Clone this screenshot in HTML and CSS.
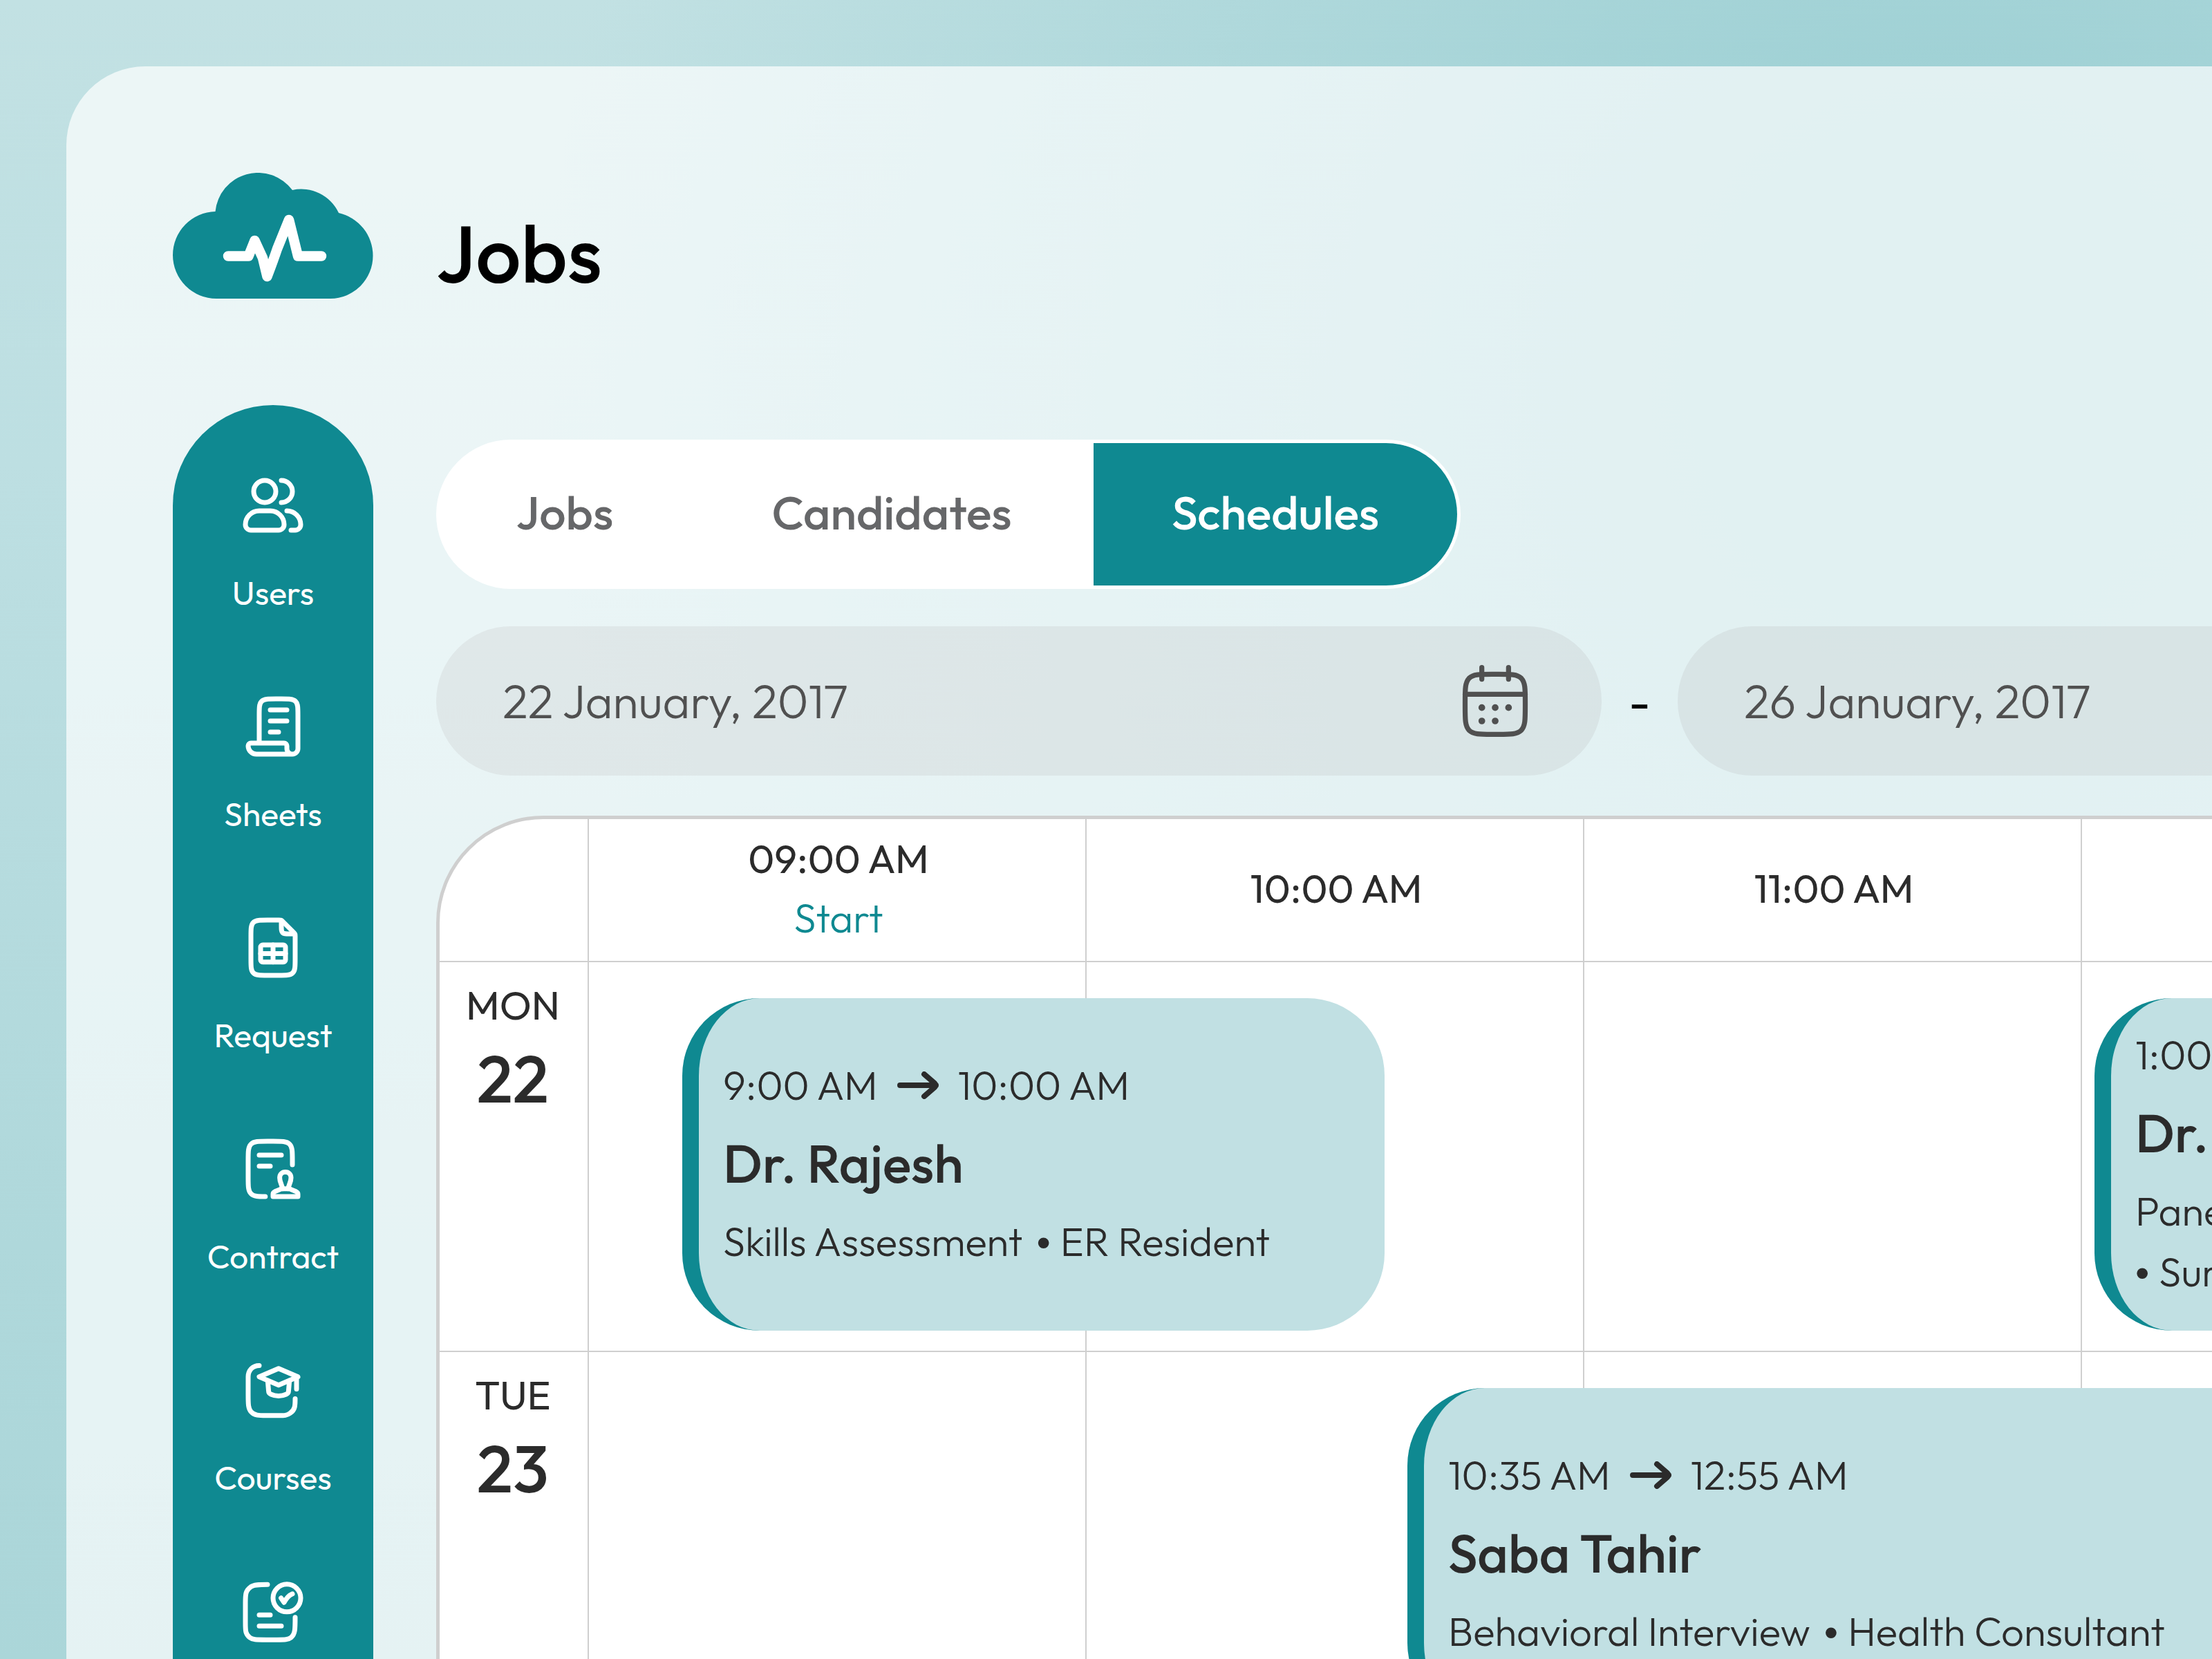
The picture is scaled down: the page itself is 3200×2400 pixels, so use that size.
FILE: index.html
```html
<!DOCTYPE html>
<html lang="en">
<head>
<meta charset="utf-8">
<meta name="viewport" content="width=device-width, initial-scale=1">
<title>Jobs – Schedules</title>
<link rel="stylesheet" href="styles.css">
</head>
<body>
<div class="panel">
  <header class="header">
    <a class="logo" href="#" aria-label="Home">
      <svg viewBox="0 0 290 182" width="290" height="182" aria-hidden="true">
        <path fill="#0f8991" d="M63 182A63 63 0 0 1 0 119A63 63 0 0 1 61.500 56A62 62 0 0 1 173 25A60 60 0 0 1 240 58A63.500 63.500 0 0 1 289.500 120A62 62 0 0 1 228 182Z"/>
        <path fill="none" stroke="#fff" stroke-width="14.500" stroke-linecap="round" stroke-linejoin="round" d="M80 120.500H109.500L118.500 98Q125 112 130 123L136.500 150Q146 125 151 110L168 68L181 120.500H215"/>
      </svg>
    </a>
    <h1 class="title">Jobs</h1>
  </header>

  <nav class="sidebar" aria-label="Main">
    <a class="side-item" href="#">
      <svg class="side-icon" viewBox="0 0 24 24" aria-hidden="true"><circle cx="9" cy="7" r="4"/><path d="M11 14H7C4.240 14 2 16.240 2 19C2 20.100 2.900 21 4 21H14C15.100 21 16 20.100 16 19C16 16.240 13.760 14 11 14Z"/><path d="M15 11C17.210 11 19 9.210 19 7C19 4.790 17.210 3 15 3"/><path d="M17 14C19.760 14 22 16.240 22 19C22 20.100 21.100 21 20 21H18.500"/></svg>
      <span>Users</span>
    </a>
    <a class="side-item" href="#">
      <svg class="side-icon" viewBox="0 0 24 24" aria-hidden="true"><path d="M7 18V8C7 5.170 7 3.760 7.880 2.880C8.760 2 10.170 2 13 2H15C17.830 2 19.240 2 20.120 2.880C21 3.760 21 5.170 21 8V20C21 21.100 20.100 22 19 22S17 21.100 17 20V19C17 18.450 16.550 18 16 18H4C3.450 18 3 18.450 3 19C3 20.660 4.340 22 6 22H19"/><path d="M11 6H17M11 10H17M11 14H14"/></svg>
      <span>Sheets</span>
    </a>
    <a class="side-item" href="#">
      <svg class="side-icon" viewBox="0 0 24 24" aria-hidden="true"><path d="M4 16V8C4 5.170 4 3.760 4.880 2.880C5.760 2 7.170 2 10 2H14.170C14.580 2 14.780 2 14.970 2.080C15.150 2.150 15.300 2.300 15.580 2.590L19.410 6.410C19.700 6.700 19.850 6.850 19.920 7.030C20 7.220 20 7.420 20 7.830V16C20 18.830 20 20.240 19.120 21.120C18.240 22 16.830 22 14 22H10C7.170 22 5.760 22 4.880 21.120C4 20.240 4 18.830 4 16Z"/><path d="M15 2.500V4C15 5.410 15 6.120 15.440 6.560C15.880 7 16.590 7 18 7H19.500"/><rect x="7.500" y="11" width="9" height="6.200" rx=".8"/><path d="M7.500 14.100H16.500M12 11V17.200"/></svg>
      <span>Request</span>
    </a>
    <a class="side-item" href="#">
      <svg class="side-icon" viewBox="0 0 24 24" aria-hidden="true"><path d="M9.200 22C6.700 22 5.050 22 4.030 20.970C3 19.950 3 18.300 3 15V9C3 5.700 3 4.050 4.030 3.030C5.050 2 6.700 2 10 2H12C15.300 2 16.950 2 17.970 3.030C19 4.050 19 5.700 19 9V10.500"/><path d="M7 7H15M7 11H11"/><path d="M15.400 19.200C15.300 17.600 14.400 17 14.400 15.200C14.400 14 15.200 13.100 16.450 13.100S18.500 14 18.500 15.200C18.500 17 17.600 17.600 17.500 19.200"/><path d="M12 22V21.100C12 20.100 13.600 20 15 19.200H18C19.400 20 21 20.100 21 21.100V22Z"/></svg>
      <span>Contract</span>
    </a>
    <a class="side-item" href="#">
      <svg class="side-icon" viewBox="0 0 24 24" aria-hidden="true"><path d="M7 3.100C4.600 3.100 3 4.900 3 7.200V13.500C3 17 3 18.800 4.100 19.900C5.200 21.200 7 21.200 9.500 21.200H14C16.200 21.200 17 21.200 18.200 20.300C20 19.200 20 17.500 20 15.100"/><path d="M14 4.200L7 7.200L14 10.200L21 7.200Z"/><path d="M10.100 8.800L10.400 12.400C10.400 13 10.700 13.300 11.200 13.500C13 14.300 15 14.300 16.800 13.500C17.300 13.300 17.600 13 17.600 12.400L17.900 8.800"/><path d="M20.500 7.500V11.600"/></svg>
      <span>Courses</span>
    </a>
    <a class="side-item" href="#" aria-label="Tests">
      <svg class="side-icon" viewBox="0 0 24 24" aria-hidden="true"><path d="M10 2.300C7 2.300 5 2.300 3.900 3.200C2 4.500 2 6 2 9V16C2 19 2 20.300 3.600 21.500C4.600 22.300 5.800 22.300 9.500 22.300H13.500C16.200 22.300 17.500 22.300 18.500 21.500C20 20.300 20 18.500 20 14.200"/><circle cx="17" cy="7.200" r="5"/><path d="M14.900 7.200L16 8.800C16.800 7.300 17.800 6.200 19 5.700"/><path d="M7 13.300H11M7 17.300H15"/></svg>
    </a>
  </nav>

  <main class="main">
    <div class="tabs" role="tablist">
      <button class="tab" type="button" role="tab" aria-selected="false">Jobs</button>
      <button class="tab" type="button" role="tab" aria-selected="false">Candidates</button>
      <button class="tab tab-active" type="button" role="tab" aria-selected="true">Schedules</button>
    </div>

    <div class="range">
      <label class="date">
        <input class="date-input" type="text" value="22 January, 2017" aria-label="From">
        <svg class="date-icon" viewBox="0 0 24 24" aria-hidden="true"><path d="M16 2V5.500M8 2V5.500"/><path d="M3 12.500C3 8.300 3 6.500 4.200 5.200C5.400 4 7.300 4 11 4H13C16.700 4 18.600 4 19.800 5.200C21 6.500 21 8.300 21 12.500V13.500C21 17.700 21 19.500 19.800 20.800C18.600 22 16.700 22 13 22H11C7.300 22 5.400 22 4.200 20.800C3 19.500 3 17.700 3 13.500Z"/><path d="M3 10H21"/><path class="date-dots" d="M8 14h.01M12 14h.01M16 14h.01M8 18h.01M12 18h.01"/></svg>
      </label>
      <span class="dash">-</span>
      <label class="date">
        <input class="date-input" type="text" value="26 January, 2017" aria-label="To">
        <svg class="date-icon" viewBox="0 0 24 24" aria-hidden="true"><path d="M16 2V5.500M8 2V5.500"/><path d="M3 12.500C3 8.300 3 6.500 4.200 5.200C5.400 4 7.300 4 11 4H13C16.700 4 18.600 4 19.800 5.200C21 6.500 21 8.300 21 12.500V13.500C21 17.700 21 19.500 19.800 20.800C18.600 22 16.700 22 13 22H11C7.300 22 5.400 22 4.200 20.800C3 19.500 3 17.700 3 13.500Z"/><path d="M3 10H21"/><path class="date-dots" d="M8 14h.01M12 14h.01M16 14h.01M8 18h.01M12 18h.01"/></svg>
      </label>
    </div>

    <div class="calendar">
      <table class="grid">
        <colgroup><col class="col-day"><col class="col-hour"><col class="col-hour"><col class="col-hour"><col class="col-hour"></colgroup>
        <thead>
          <tr>
            <td></td>
            <th scope="col">09:00 AM<span class="start">Start</span></th>
            <th scope="col">10:00 AM</th>
            <th scope="col">11:00 AM</th>
            <th scope="col">12:00 PM</th>
          </tr>
        </thead>
        <tbody>
          <tr>
            <th scope="row">MON<span class="day">22</span></th>
            <td>
              <article class="event" style="left:135px;width:1016px">
                <p class="event-time">9:00 AM <svg class="arrow" viewBox="0 0 60 40" aria-hidden="true"><path d="M4 20H56M39 4L54 17Q57 20 54 23L39 36"/></svg> 10:00 AM</p>
                <h2 class="event-name">Dr. Rajesh</h2>
                <p class="event-info"><span>Skills Assessment</span><span class="role">ER Resident</span></p>
              </article>
            </td>
            <td></td>
            <td></td>
            <td>
              <article class="event" style="left:18px;width:600px">
                <p class="event-time">1:00 PM <svg class="arrow" viewBox="0 0 60 40" aria-hidden="true"><path d="M4 20H56M39 4L54 17Q57 20 54 23L39 36"/></svg> 2:00 PM</p>
                <h2 class="event-name">Dr. Ahmed</h2>
                <p class="event-info"><span>Panel Interview</span><span class="role">Surgical Resident</span></p>
              </article>
            </td>
          </tr>
          <tr>
            <th scope="row">TUE<span class="day">23</span></th>
            <td></td>
            <td>
              <article class="event" style="left:464px;width:1700px">
                <p class="event-time">10:35 AM <svg class="arrow" viewBox="0 0 60 40" aria-hidden="true"><path d="M4 20H56M39 4L54 17Q57 20 54 23L39 36"/></svg> 12:55 AM</p>
                <h2 class="event-name">Saba Tahir</h2>
                <p class="event-info"><span>Behavioral Interview</span><span class="role">Health Consultant</span></p>
              </article>
            </td>
            <td></td>
            <td></td>
          </tr>
          <tr>
            <th scope="row">WED<span class="day">24</span></th>
            <td></td>
            <td></td>
            <td></td>
            <td></td>
          </tr>
        </tbody>
      </table>
    </div>
  </main>
</div>
</body>
</html>
```
FILE: styles.css
```css
:root {
  --teal: #0f8991;
  --pale: #c1e0e3;
  --ink: #2b2b2b;
  --line: #cfcfcf;
}

* {
  box-sizing: border-box;
  margin: 0;
}

body {
  height: 100vh;
  overflow: hidden;
  padding: 96px 0 0 96px;
  font-family: "Outfit", "Lato", sans-serif;
  color: var(--ink);
  background:
    radial-gradient(circle at 88% 22%, #9dd0d4 0, #9dd0d4 8%, rgba(157, 208, 212, 0) 60%),
    linear-gradient(180deg, #c2e1e3 0%, #bddfe2 28%, #afd8db 75%, #abd6d9 100%);
}

.panel {
  display: grid;
  grid-template-columns: 290px 1fr;
  column-gap: 91px;
  row-gap: 154px;
  min-height: 100vh;
  padding: 154px 0 0 154px;
  border-top-left-radius: 114px;
  background: rgba(255, 255, 255, .69);
}

.header {
  grid-column: 1 / -1;
  display: flex;
  align-items: flex-end;
  gap: 91px;
  height: 182px;
}

.logo,
.logo svg {
  display: block;
}

.title {
  font-size: 116px;
  line-height: 132px;
  font-weight: 500;
  color: #000;
}

.sidebar {
  display: flex;
  flex-direction: column;
  gap: 116px;
  padding: 97px 0;
  border-radius: 145px 145px 0 0;
  background: var(--teal);
}

.side-item {
  display: flex;
  flex-direction: column;
  align-items: center;
  gap: 48px;
  font-size: 48px;
  line-height: 60px;
  color: #fff;
  text-decoration: none;
}

.side-icon {
  width: 96px;
  height: 96px;
  fill: none;
  stroke: #fff;
  stroke-width: 1.75;
  stroke-linecap: round;
  stroke-linejoin: round;
}

.main {
  min-width: 0;
  padding-top: 50px;
}

.tabs {
  display: inline-grid;
  grid-template-columns: 362px 584px 526px;
  height: 216px;
  padding: 5px;
  border-radius: 108px;
  background: #fff;
}

.tab {
  padding: 0 0 6px;
  border: 0;
  background: none;
  font: inherit;
  font-size: 68px;
  font-weight: 500;
  color: #666769;
}

.tab-active {
  border-radius: 0 103px 103px 0;
  background: var(--teal);
  color: #fff;
}

.range {
  display: flex;
  align-items: center;
  margin: 54px 0 58px;
}

.date {
  flex: 0 0 1686px;
  display: flex;
  align-items: center;
  height: 216px;
  padding: 0 96px;
  border-radius: 108px;
  background: rgba(70, 40, 40, .06);
}

.date-input {
  flex: 1;
  min-width: 0;
  padding: 0;
  border: 0;
  background: none;
  font: inherit;
  font-size: 68px;
  font-weight: 300;
  color: #505050;
}

.date-icon {
  width: 116px;
  height: 116px;
  fill: none;
  stroke: #505050;
  stroke-width: 1.5;
  stroke-linecap: round;
}

.date-dots {
  stroke-width: 2;
}

.dash {
  flex: 0 0 110px;
  text-align: center;
  font-size: 68px;
  color: #000;
}

.calendar {
  width: max-content;
  border: 5px solid var(--line);
  border-radius: 155px;
  overflow: hidden;
  background: #fff;
}

.grid {
  width: 3096px;
  table-layout: fixed;
  border-collapse: separate;
  border-spacing: 0;
  font-size: 58px;
}

.col-day {
  width: 216px;
}

.col-hour {
  width: 720px;
}

.grid th,
.grid td {
  position: relative;
  padding: 0;
  border-right: 2px solid var(--line);
  border-bottom: 2px solid var(--line);
  font-weight: 400;
  text-align: center;
}

.grid thead tr {
  height: 207px;
}

.grid thead th {
  padding: 0 0 6px 4px;
  line-height: 86px;
}

.grid tbody tr {
  height: 564px;
}

.grid tbody th {
  padding: 18px 2px 0 0;
  line-height: 88px;
  vertical-align: top;
}

.start {
  display: block;
  font-weight: 300;
  color: var(--teal);
}

.day {
  display: block;
  font-size: 96px;
  line-height: 124px;
  font-weight: 500;
}

.event {
  position: absolute;
  z-index: 1;
  top: 52px;
  height: 481px;
  display: flex;
  flex-direction: column;
  justify-content: center;
  gap: 20px;
  padding: 0 35px 2px;
  border-left: 24px solid var(--teal);
  border-radius: 112px;
  background: var(--pale);
  text-align: left;
}

.event-time {
  display: flex;
  align-items: center;
  gap: 28px;
  font-weight: 300;
  line-height: 88px;
  white-space: nowrap;
}

.arrow {
  width: 60px;
  height: 40px;
  fill: none;
  stroke: var(--ink);
  stroke-width: 8;
  stroke-linecap: round;
  stroke-linejoin: round;
}

.event-name {
  font-size: 77px;
  line-height: 98px;
  font-weight: 500;
}

.event-info {
  display: flex;
  flex-wrap: wrap;
  column-gap: 20px;
  font-weight: 300;
  line-height: 88px;
}

.role::before {
  content: "•";
  margin-right: 14px;
  font-family: "Liberation Sans", sans-serif;
}
```
